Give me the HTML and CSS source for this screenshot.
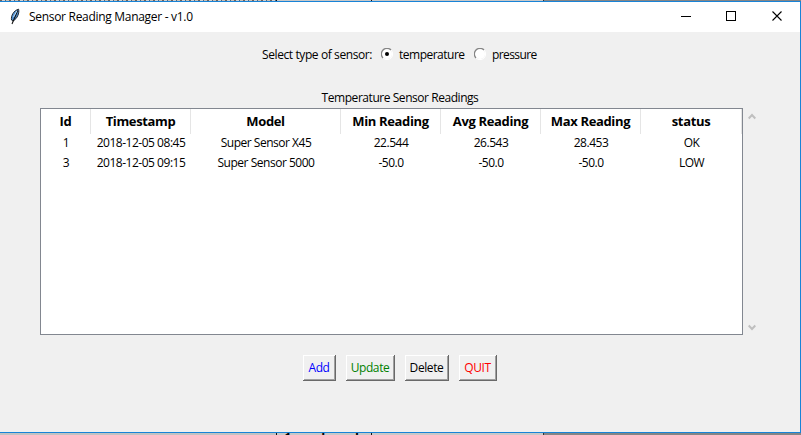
FILE: index.html
```html
<!DOCTYPE html>
<html lang="en">
<head>
<meta charset="utf-8">
<title>Sensor Reading Manager - v1.0</title>
<link rel="stylesheet" href="styles.css">
</head>
<body>
<div class="backdrop backdrop-top"><span class="sheet"></span><span class="cell"></span><span class="cell wide"></span></div>
<main class="window">
  <header class="titlebar">
    <svg class="feather" width="12" height="18" viewBox="0 0 12 18"><path d="M2.5 12C1.8 8 4.5 2.5 9.6 1.2C10.5 5 8.5 10.5 4 13Z" fill="#4f8fd0" stroke="#20262e" stroke-width="1"/><path d="M8.7 2.5L3 16" fill="none" stroke="#111" stroke-width="1.1"/><path d="M7.8 3L4.5 9" stroke="#b9daf6" stroke-width="1"/></svg>
    <h1>Sensor Reading Manager - v1.0</h1>
    <svg class="controls" width="108" height="12" viewBox="0 0 108 12" fill="none" stroke="#000"><path d="M1 5.5H11M46.5 .5h9v9h-9z" shape-rendering="crispEdges"/><path d="M92.5 .5l9 9m0-9l-9 9" stroke-width="1.1"/></svg>
  </header>
  <div class="choices">
    <span class="prompt">Select type of sensor:</span>
    <svg class="radio" width="12" height="12" viewBox="0 0 12 12"><circle cx="6" cy="6" r="5" fill="#fff"/><path d="M2 10A5.3 5.3 0 0 1 10 2" fill="none" stroke="#858585" stroke-width="1.3"/><path d="M2 10A5.3 5.3 0 0 0 10 2" fill="none" stroke="#fff"/><circle cx="6" cy="6" r="2" fill="#000"/></svg>
    <span class="temperature">temperature</span>
    <svg class="radio" width="12" height="12" viewBox="0 0 12 12"><circle cx="6" cy="6" r="5" fill="#fff"/><path d="M2 10A5.3 5.3 0 0 1 10 2" fill="none" stroke="#858585" stroke-width="1.3"/><path d="M2 10A5.3 5.3 0 0 0 10 2" fill="none" stroke="#fff"/></svg>
    <span class="pressure">pressure</span>
  </div>
  <h2>Temperature Sensor Readings</h2>
  <section class="readings">
    <div class="table">
      <div class="row head"><span>Id</span><span>Timestamp</span><span>Model</span><span>Min Reading</span><span>Avg Reading</span><span>Max Reading</span><span>status</span></div>
      <div class="row"><span>1</span><span>2018-12-05 08:45</span><span>Super Sensor X45</span><span>22.544</span><span>26.543</span><span>28.453</span><span>OK</span></div>
      <div class="row"><span>3</span><span>2018-12-05 09:15</span><span>Super Sensor 5000</span><span>-50.0</span><span>-50.0</span><span>-50.0</span><span>LOW</span></div>
    </div>
    <div class="scrollbar">
      <svg width="8" height="7" viewBox="0 0 8 7"><path d="M.7 5.5L4 2l3.3 3.5" fill="none" stroke="#bfbfbf" stroke-width="2"/></svg>
      <svg width="8" height="7" viewBox="0 0 8 7"><path d="M.7 1.5L4 5l3.3-3.5" fill="none" stroke="#bfbfbf" stroke-width="2"/></svg>
    </div>
  </section>
  <div class="actions"><button class="add">Add</button><button class="update">Update</button><button class="delete">Delete</button><button class="quit">QUIT</button></div>
</main>
<div class="backdrop backdrop-bottom"><span class="sheet"></span><span class="cell note">1 mark each</span><span class="cell wide"></span></div>
</body>
</html>
```

FILE: styles.css
```css
* { box-sizing: border-box; }
body { margin: 0; width: 801px; height: 435px; overflow: hidden; background: #8b8b8b; font: 12px/16px "Open Sans", "Noto Sans", sans-serif; color: #000; }
h1, h2 { margin: 0; font: inherit; }
svg { display: block; flex: none; }
.backdrop { display: flex; height: 2px; overflow: hidden; background: #858585; }
.backdrop-top { height: 1px; }
.sheet { width: 276px; background: #c2c2c2; }
.backdrop-top .sheet { background: repeating-linear-gradient(90deg, #6e625b 0 2px, #d0d0d0 2px 5px, #52677c 5px 6px, #c9c0b6 6px 9px); }
.cell { width: 95px; background: #c8c8c8; border-left: 1px solid #111; }
.cell.wide { width: 173px; border-right: 1px solid #333; }
.note { padding-left: 7px; font-size: 13px; font-weight: 700; line-height: 8px; white-space: nowrap; }
.window { height: 432px; background: #f0f0f0; border: solid #1883d7; border-width: 1px 1px 1px 0; }
.titlebar { display: flex; height: 30px; background: #fff; padding-left: 9px; }
.feather { margin-top: 6px; }
.titlebar h1 { margin: 7px 0 0 8px; letter-spacing: -.3px; white-space: nowrap; }
.controls { margin: 9px 12px 0 auto; }
.choices { display: flex; height: 16px; margin: 15px 0 0 262px; white-space: nowrap; }
.prompt { width: 119px; letter-spacing: -.4px; }
.temperature { width: 75px; letter-spacing: -.5px; }
.pressure { letter-spacing: -.6px; }
.radio { margin: 1px 6px 0 0; }
h2 { margin: 27px 0 0; text-align: center; letter-spacing: -.45px; line-height: 16px; }
.readings { display: flex; margin: 2px 0 0 40px; height: 227px; }
.table { width: 703px; border: 1px solid #828790; background: #fff; }
.row { display: grid; grid-template-columns: 50px 100px 150px 100px 100px 100px 101px; height: 20px; line-height: 20px; text-align: center; letter-spacing: -.48px; white-space: nowrap; }
.head { height: 24px; line-height: 25px; font-size: 13px; font-weight: 700; letter-spacing: -.35px; }
.head span { border-right: 1px solid #e5e5e5; }
.scrollbar { width: 17px; display: flex; flex-direction: column; justify-content: space-between; align-items: center; padding: 5px 0 4px; }
.actions { display: flex; gap: 10px; margin: 20px 0 0 303px; }
button { height: 26px; padding: 0 1px 1px 0; border: 0; background: #f0f0f0; box-shadow: inset -1px -1px #696969, inset 1px 1px #fff, inset -2px -2px #a0a0a0; font: inherit; letter-spacing: -.4px; }
.add { width: 33px; color: #00f; }
.update { width: 49px; color: #008000; }
.delete { width: 44px; color: #000; }
.quit { width: 38px; color: #f00; }
```
